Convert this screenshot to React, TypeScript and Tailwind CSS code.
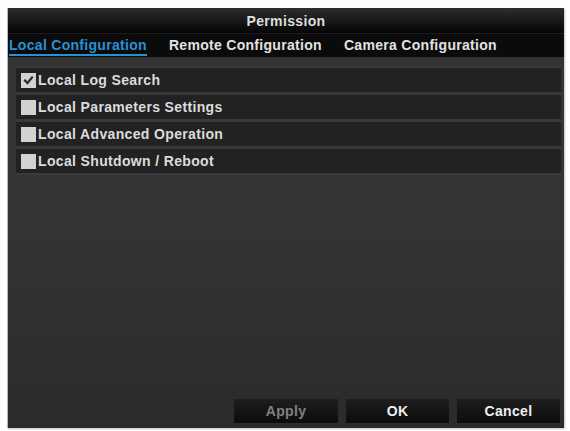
import React from "react";

const font = { fontFamily: '"Liberation Sans", Arial, sans-serif' };

function Check({ checked }: { checked?: boolean }) {
  return (
    <div className="w-[15px] h-[15px] bg-[#d2d2d2] flex items-center justify-center shrink-0">
      {checked && (
        <svg width="11" height="11" viewBox="0 0 11 11">
          <path d="M2 5.5 L4.5 8 L9 2.5" stroke="#2a2a2a" strokeWidth="2.2" fill="none" strokeLinecap="square" />
        </svg>
      )}
    </div>
  );
}

const items = [
  { label: "Local Log Search", checked: true },
  { label: "Local Parameters Settings" },
  { label: "Local Advanced Operation" },
  { label: "Local Shutdown / Reboot" },
];

export default function App() {
  return (
    <div className="w-[570px] h-[431px] bg-white pt-[8px] pl-[7px]" style={font}>
      <div className="w-[557px] h-[420px] flex flex-col border-l border-[#b8b8b8] bg-[#313131] shadow-[1px_1px_2px_rgba(0,0,0,0.25)]">
        <div className="h-[25px] shrink-0 flex items-center justify-center pt-[1px] bg-gradient-to-b from-[#2e2e2e] to-[#060606] text-[#dedede] text-[14px] font-bold tracking-[0.35px]">
          Permission
        </div>
        <div className="h-[24px] shrink-0 bg-[#0b0b0b] border-t border-[#1c1c1c] flex items-start gap-[22px] pl-[1px] text-[14px] font-bold tracking-[0.3px]">
          <div className="pt-[3px] h-full flex flex-col">
            <span className="text-[#2a90d4] leading-[16px]">Local Configuration</span>
            <div className="mt-[1px] h-[2px] bg-[#2a90d4]" />
          </div>
          <span className="pt-[3px] leading-[16px] text-[#e2e2e2]">Remote Configuration</span>
          <span className="pt-[3px] leading-[16px] text-[#e2e2e2]">Camera Configuration</span>
        </div>
        <div className="flex-1 flex flex-col pt-[10px] pl-[8px] pr-[3px] bg-gradient-to-b from-[#343434] via-[#333333] to-[#2b2b2b]">
          <div className="flex flex-col gap-[3px] bg-[#3a3a3a] pt-[1px] pb-[2px]">
            {items.map((it) => (
              <div key={it.label} className="h-[24px] bg-[#222222] flex items-center pl-[5px] gap-[2px]">
                <Check checked={it.checked} />
                <span className="text-[#dcdcdc] text-[14px] font-bold tracking-[0.35px] leading-none">{it.label}</span>
              </div>
            ))}
          </div>
          <div className="flex-1" />
          <div className="flex justify-end gap-[6px] pb-[4px] text-[14px] font-bold tracking-[0.35px]">
            <button className="w-[106px] h-[26px] bg-gradient-to-b from-[#1e1e1e] to-[#0c0c0c] border border-[#2c2c2c] text-[#808080]">Apply</button>
            <button className="w-[105px] h-[26px] bg-gradient-to-b from-[#1e1e1e] to-[#0c0c0c] border border-[#2c2c2c] text-[#eeeeee]">OK</button>
            <button className="w-[105px] h-[26px] bg-gradient-to-b from-[#1e1e1e] to-[#0c0c0c] border border-[#2c2c2c] text-[#eeeeee]">Cancel</button>
          </div>
        </div>
      </div>
    </div>
  );
}
